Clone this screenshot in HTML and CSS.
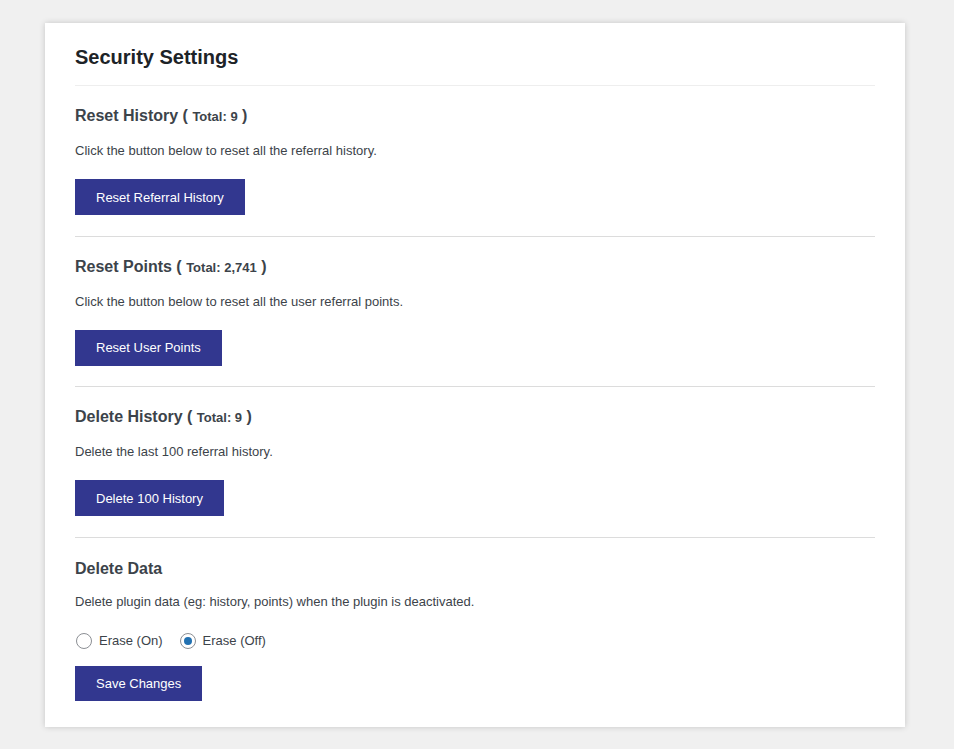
FILE: index.html
```html
<!DOCTYPE html>
<html>
<head>
<meta charset="utf-8">
<link rel="stylesheet" href="styles.css">
</head>
<body>
<div class="card">
  <h1 class="title">Security Settings</h1>
  <section class="section">
    <h2 class="heading">Reset History <span class="paren">(</span> <span class="total">Total: 9</span> <span class="paren">)</span></h2>
    <p class="desc">Click the button below to reset all the referral history.</p>
    <button class="btn">Reset Referral History</button>
  </section>
  <section class="section">
    <h2 class="heading">Reset Points <span class="paren">(</span> <span class="total">Total: 2,741</span> <span class="paren">)</span></h2>
    <p class="desc">Click the button below to reset all the user referral points.</p>
    <button class="btn">Reset User Points</button>
  </section>
  <section class="section">
    <h2 class="heading">Delete History <span class="paren">(</span> <span class="total">Total: 9</span> <span class="paren">)</span></h2>
    <p class="desc">Delete the last 100 referral history.</p>
    <button class="btn">Delete 100 History</button>
  </section>
  <section class="section last">
    <h2 class="heading">Delete Data</h2>
    <p class="desc">Delete plugin data (eg: history, points) when the plugin is deactivated.</p>
    <div class="radios">
      <label class="radio"><span class="circle"></span>Erase (On)</label>
      <label class="radio"><span class="circle checked"></span>Erase (Off)</label>
    </div>
    <button class="btn">Save Changes</button>
  </section>
</div>
</body>
</html>
```
FILE: styles.css
```css
html, body {
  margin: 0;
  padding: 0;
  background: #f0f0f0;
  font-family: "Liberation Sans", Arial, sans-serif;
}
body {
  padding: 23px 49px 22px 45px;
}
.card {
  background: #fff;
  width: 800px;
  padding: 22px 30px 26px 30px;
  box-shadow: 0 0 6px rgba(0,0,0,0.18);
}
.title {
  margin: 0;
  font-size: 20px;
  line-height: 24px;
  font-weight: bold;
  color: #1d2327;
  padding-bottom: 16px;
  border-bottom: 1px solid #eeeeee;
}
.section {
  padding: 20px 0 20.5px;
  border-bottom: 1px solid #dcdcdc;
}
.section.last {
  border-bottom: none;
  padding-top: 21px;
  padding-bottom: 0;
}
.heading {
  margin: 0;
  font-size: 16px;
  line-height: 20px;
  font-weight: bold;
  color: #3c434a;
}
.paren {
  font-size: 16px;
}
.total {
  font-size: 13px;
}
.desc {
  margin: 15px 0 0;
  font-size: 13px;
  line-height: 18px;
  color: #3c434a;
}
.btn {
  display: block;
  margin-top: 19px;
  height: 36px;
  padding: 0 21px;
  background: #32378f;
  color: #fff;
  border: none;
  font-family: "Liberation Sans", Arial, sans-serif;
  font-size: 13px;
}
.section.last .desc {
  margin-top: 14px;
}
.radios {
  display: flex;
  gap: 16px;
  margin-top: 21px;
  height: 18px;
  align-items: center;
}
.radio {
  display: flex;
  align-items: center;
  font-size: 13px;
  color: #3c434a;
}
.circle {
  width: 14px;
  height: 14px;
  border: 1px solid #8c8f94;
  border-radius: 50%;
  margin: 0 7px 0 1px;
  position: relative;
  box-sizing: content-box;
}
.circle.checked::after {
  content: "";
  position: absolute;
  left: 3px;
  top: 3px;
  width: 8px;
  height: 8px;
  border-radius: 50%;
  background: #2271b1;
}
.section.last .btn {
  margin-top: 16px;
  height: 35px;
}
```
